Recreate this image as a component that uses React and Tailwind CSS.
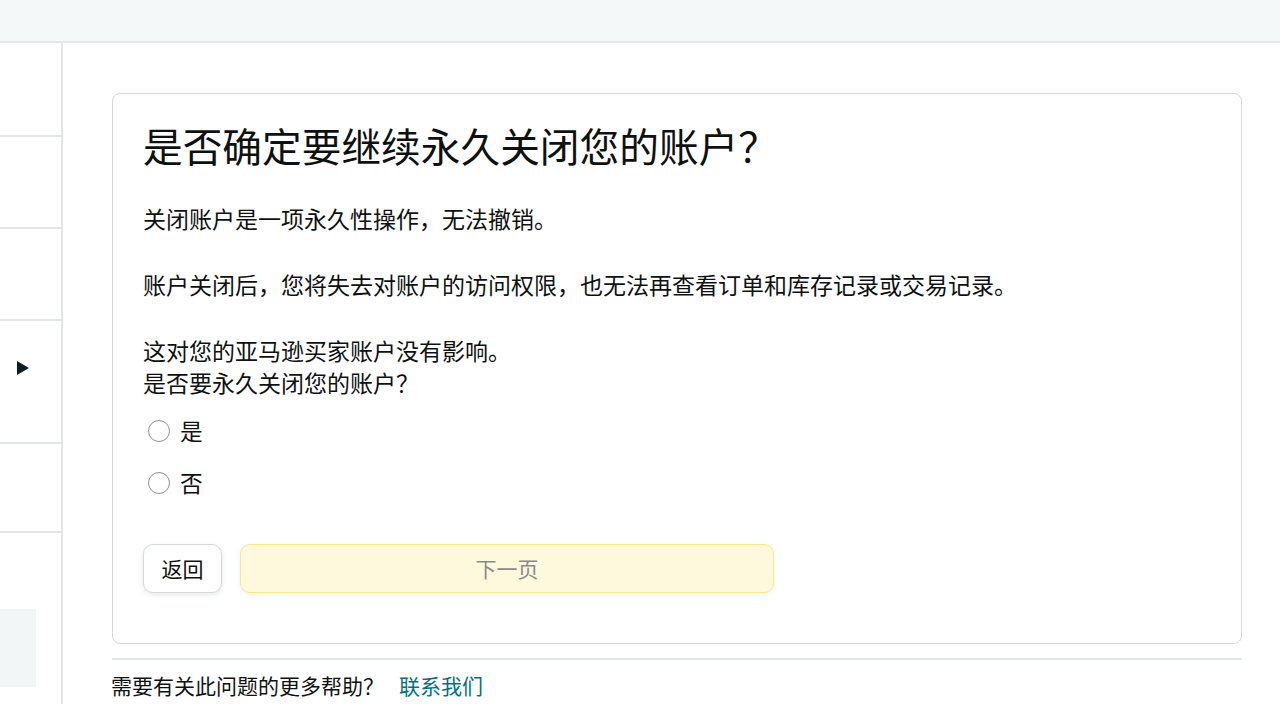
export default function App() {
  return (
    <div className="w-[1280px] h-[704px] overflow-hidden bg-white text-[#0f1111] font-['Noto_Sans_CJK_SC','Noto_Sans',sans-serif] flex flex-col">
      <div className="h-[43px] shrink-0 bg-[#f5f8f9] border-b-2 border-[#e3e6e6]"></div>
      <div className="flex flex-1 min-h-0">
        <aside className="w-[63px] shrink-0 border-r-2 border-[#e3e6e6] flex flex-col">
          <div className="h-[94px] border-b-2 border-[#e3e6e6]"></div>
          <div className="h-[92px] border-b-2 border-[#e3e6e6]"></div>
          <div className="h-[92px] border-b-2 border-[#e3e6e6]"></div>
          <div className="h-[123px] border-b-2 border-[#e3e6e6] pl-[17px] pt-[40px]">
            <svg width="12" height="14" viewBox="0 0 12 14" className="block"><path d="M0 0 L12 7 L0 14 Z" fill="#0f1f24" /></svg>
          </div>
          <div className="h-[89px] border-b-2 border-[#e3e6e6]"></div>
          <div className="h-[76px]"></div>
          <div className="w-[36px] h-[78px] bg-[#f3f6f7]"></div>
        </aside>
        <main className="flex-1 pl-[49px] pt-[50px]">
          <div className="w-[1130px]">
            <section className="border border-[#d5d9d9] rounded-[8px] pl-[30px] pr-[30px] pt-[27px] pb-[50px]">
              <h1 className="text-[39.7px] leading-[48px] font-normal mb-[33px]">是否确定要继续永久关闭您的账户？</h1>
              <p className="text-[23px] leading-[32px] mb-[34px]">关闭账户是一项永久性操作，无法撤销。</p>
              <p className="text-[23px] leading-[32px] mb-[34px]">账户关闭后，您将失去对账户的访问权限，也无法再查看订单和库存记录或交易记录。</p>
              <p className="text-[23px] leading-[32px]">这对您的亚马逊买家账户没有影响。</p>
              <p className="text-[23px] leading-[32px]">是否要永久关闭您的账户？</p>
              <div className="mt-[17px] flex flex-col gap-[20px]">
                <label className="flex items-center h-[32px] pl-[5px] gap-[10px]">
                  <span className="w-[22px] h-[22px] rounded-full border-[1.5px] border-[#8d9096] bg-white"></span>
                  <span className="text-[22.7px] leading-[32px]">是</span>
                </label>
                <label className="flex items-center h-[32px] pl-[5px] gap-[10px]">
                  <span className="w-[22px] h-[22px] rounded-full border-[1.5px] border-[#8d9096] bg-white"></span>
                  <span className="text-[22.7px] leading-[32px]">否</span>
                </label>
              </div>
              <div className="mt-[45px] flex gap-[18px]">
                <button className="w-[79px] h-[49px] rounded-[10px] border border-[#d5d9d9] bg-white shadow-[0_2px_5px_rgba(213,217,217,0.6)] text-[21px] text-[#0f1111] flex items-center justify-center">返回</button>
                <button className="w-[534px] h-[49px] rounded-[10px] border border-[#fce78f] bg-[#fef8dd] shadow-[0_2px_5px_rgba(213,217,217,0.4)] text-[21px] text-[#8a8a8a] flex items-center justify-center">下一页</button>
              </div>
            </section>
            <div className="mt-[14px] h-[2px] bg-[#e3e6e6]"></div>
            <div className="mt-[11px] -ml-[1px] text-[21px] leading-[28px] flex">
              <span>需要有关此问题的更多帮助？</span>
              <span className="ml-[15px] text-[#007185]">联系我们</span>
            </div>
          </div>
        </main>
      </div>
    </div>
  );
}
